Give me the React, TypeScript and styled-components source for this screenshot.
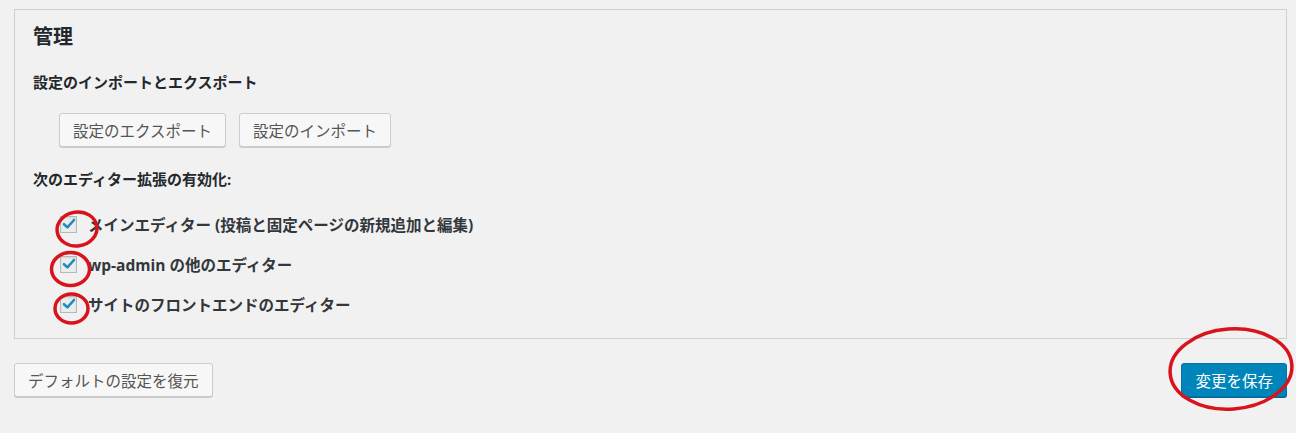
import React from 'react';
import styled, { createGlobalStyle } from 'styled-components';

const GlobalStyle = createGlobalStyle`
  html, body {
    margin: 0;
    padding: 0;
    background: #f1f1f1;
  }
  body {
    font-family: "Open Sans", "Noto Sans CJK JP", sans-serif;
    color: #23282d;
  }
`;

const Page = styled.div`
  position: relative;
  width: 1296px;
  height: 433px;
  box-sizing: border-box;
  padding: 9px 9px 0 14px;
  overflow: hidden;
`;

const Panel = styled.div`
  border: 1px solid #cfcfcf;
  padding: 15px 18px 14px 18px;
`;

const Heading = styled.h2`
  margin: 0;
  font-size: 20px;
  line-height: 24px;
  font-weight: 700;
  color: #23282d;
`;

const SectionLabel = styled.div<{ $top: number }>`
  margin-top: ${p => p.$top}px;
  font-size: 15px;
  line-height: 20px;
  font-weight: 700;
  color: #23282d;
`;

const ButtonRow = styled.div`
  display: flex;
  gap: 13px;
  margin: 21px 0 0 26px;
`;

const Button = styled.button<{ $primary?: boolean }>`
  box-sizing: border-box;
  height: 34px;
  padding: 0 13px;
  font-family: "Noto Sans CJK JP", sans-serif;
  font-size: 15.5px;
  line-height: 32px;
  border-radius: 3px;
  cursor: pointer;
  border: 1px solid ${p => (p.$primary ? '#0073aa' : '#cccccc')};
  background: ${p => (p.$primary ? '#0085ba' : '#f7f7f7')};
  color: ${p => (p.$primary ? '#ffffff' : '#555555')};
  box-shadow: 0 1px 0 ${p => (p.$primary ? '#006799' : '#cccccc')};
`;

const OptionList = styled.div`
  display: flex;
  flex-direction: column;
  margin: 15px 0 0 27px;
`;

const Option = styled.label`
  display: flex;
  align-items: center;
  gap: 11px;
  height: 40px;
  font-size: 15.5px;
  font-weight: 700;
  color: #32373c;
`;

const Box = styled.span`
  box-sizing: border-box;
  width: 17px;
  height: 17px;
  border: 1px solid #b4b9be;
  background: #ececec;
  box-shadow: inset 0 1px 2px rgba(0, 0, 0, 0.1);
  display: flex;
  align-items: center;
  justify-content: center;
`;

const Footer = styled.div`
  display: flex;
  justify-content: space-between;
  margin-top: 24px;
`;

const Overlay = styled.svg`
  position: absolute;
  left: 0;
  top: 0;
  pointer-events: none;
`;

const Check = () => (
  <Box>
    <svg width="14" height="14" viewBox="0 0 14 14">
      <path d="M2 7.2 L5.4 10.4 L12 3" fill="none" stroke="#1e8cbe" strokeWidth="2.6" strokeLinecap="round" strokeLinejoin="round" />
    </svg>
  </Box>
);

const editors = [
  'メインエディター (投稿と固定ページの新規追加と編集)',
  'wp-admin の他のエディター',
  'サイトのフロントエンドのエディター',
];

export default function App() {
  return (
    <>
      <GlobalStyle />
      <Page>
        <Panel>
          <Heading>管理</Heading>
          <SectionLabel $top={23}>設定のインポートとエクスポート</SectionLabel>
          <ButtonRow>
            <Button>設定のエクスポート</Button>
            <Button>設定のインポート</Button>
          </ButtonRow>
          <SectionLabel $top={22}>次のエディター拡張の有効化:</SectionLabel>
          <OptionList>
            {editors.map(text => (
              <Option key={text}>
                <Check />
                <span>{text}</span>
              </Option>
            ))}
          </OptionList>
        </Panel>
        <Footer>
          <Button>デフォルトの設定を復元</Button>
          <Button $primary>変更を保存</Button>
        </Footer>
        {/* red annotation marks drawn over the screenshot */}
        <Overlay width="1296" height="433">
          <g fill="none" stroke="#d8131c" strokeWidth="3.5">
            <ellipse cx="77" cy="229" rx="20" ry="17" transform="rotate(-8 77 229)" />
            <ellipse cx="70.5" cy="269" rx="19" ry="16.5" />
            <ellipse cx="71.5" cy="308.5" rx="16.5" ry="14.5" />
            <ellipse cx="1231" cy="369" rx="61" ry="40" transform="rotate(-4 1231 369)" />
          </g>
        </Overlay>
      </Page>
    </>
  );
}
